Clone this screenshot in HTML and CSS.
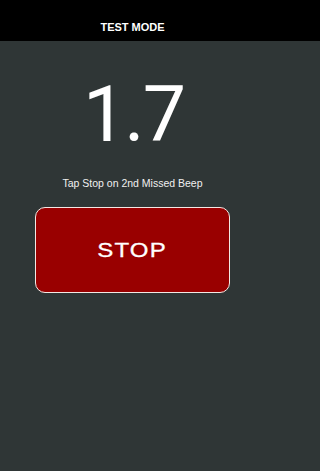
FILE: index.html
```html
<!DOCTYPE html>
<html>
<head>
<meta charset="utf-8">
<link rel="stylesheet" href="styles.css">
</head>
<body>
<div class="app">
  <header class="topbar"><span class="title">TEST MODE</span></header>
  <main class="content">
    <div class="count">1.7</div>
    <div class="hint">Tap Stop on 2nd Missed Beep</div>
    <button class="stop"><span class="stop-label">STOP</span></button>
  </main>
</div>
</body>
</html>
```
FILE: styles.css
```css
html, body {
  margin: 0;
  padding: 0;
  height: 100%;
}
body {
  background: linear-gradient(#000 0, #000 41px, #2f3636 41px) no-repeat;
  background-color: #2f3636;
  font-family: "Liberation Sans", Arial, sans-serif;
  color: #fff;
}
.app {
  display: flex;
  flex-direction: column;
  width: 265px;
  height: 100%;
}
.topbar {
  height: 41px;
  background: #000;
  display: flex;
  align-items: flex-end;
  justify-content: center;
  padding-bottom: 8px;
  box-sizing: border-box;
}
.title {
  font-size: 11px;
  font-weight: bold;
  line-height: 12px;
}
.content {
  display: flex;
  flex-direction: column;
  align-items: center;
}
.count {
  margin-top: 34px;
  padding-left: 2px;
  font-family: Roboto, "Liberation Sans", sans-serif;
  font-weight: 400;
  font-size: 77px;
  line-height: 80px;
  letter-spacing: -2px;
}
.hint {
  margin-top: 22px;
  font-size: 10.5px;
  line-height: 12px;
  color: #f0f0f0;
}
.stop {
  margin-top: 18px;
  width: 195px;
  height: 86px;
  background: #990000;
  border: 1.5px solid #f4e8e4;
  border-radius: 10px;
  display: flex;
  align-items: center;
  justify-content: center;
  padding: 0;
}
.stop-label {
  display: inline-block;
  color: #fff;
  font-family: "Liberation Sans", Arial, sans-serif;
  font-size: 20px;
  letter-spacing: 1px;
  transform: scaleX(1.2);
  line-height: 20px;
  -webkit-text-stroke: 0.3px #fff;
}
```
